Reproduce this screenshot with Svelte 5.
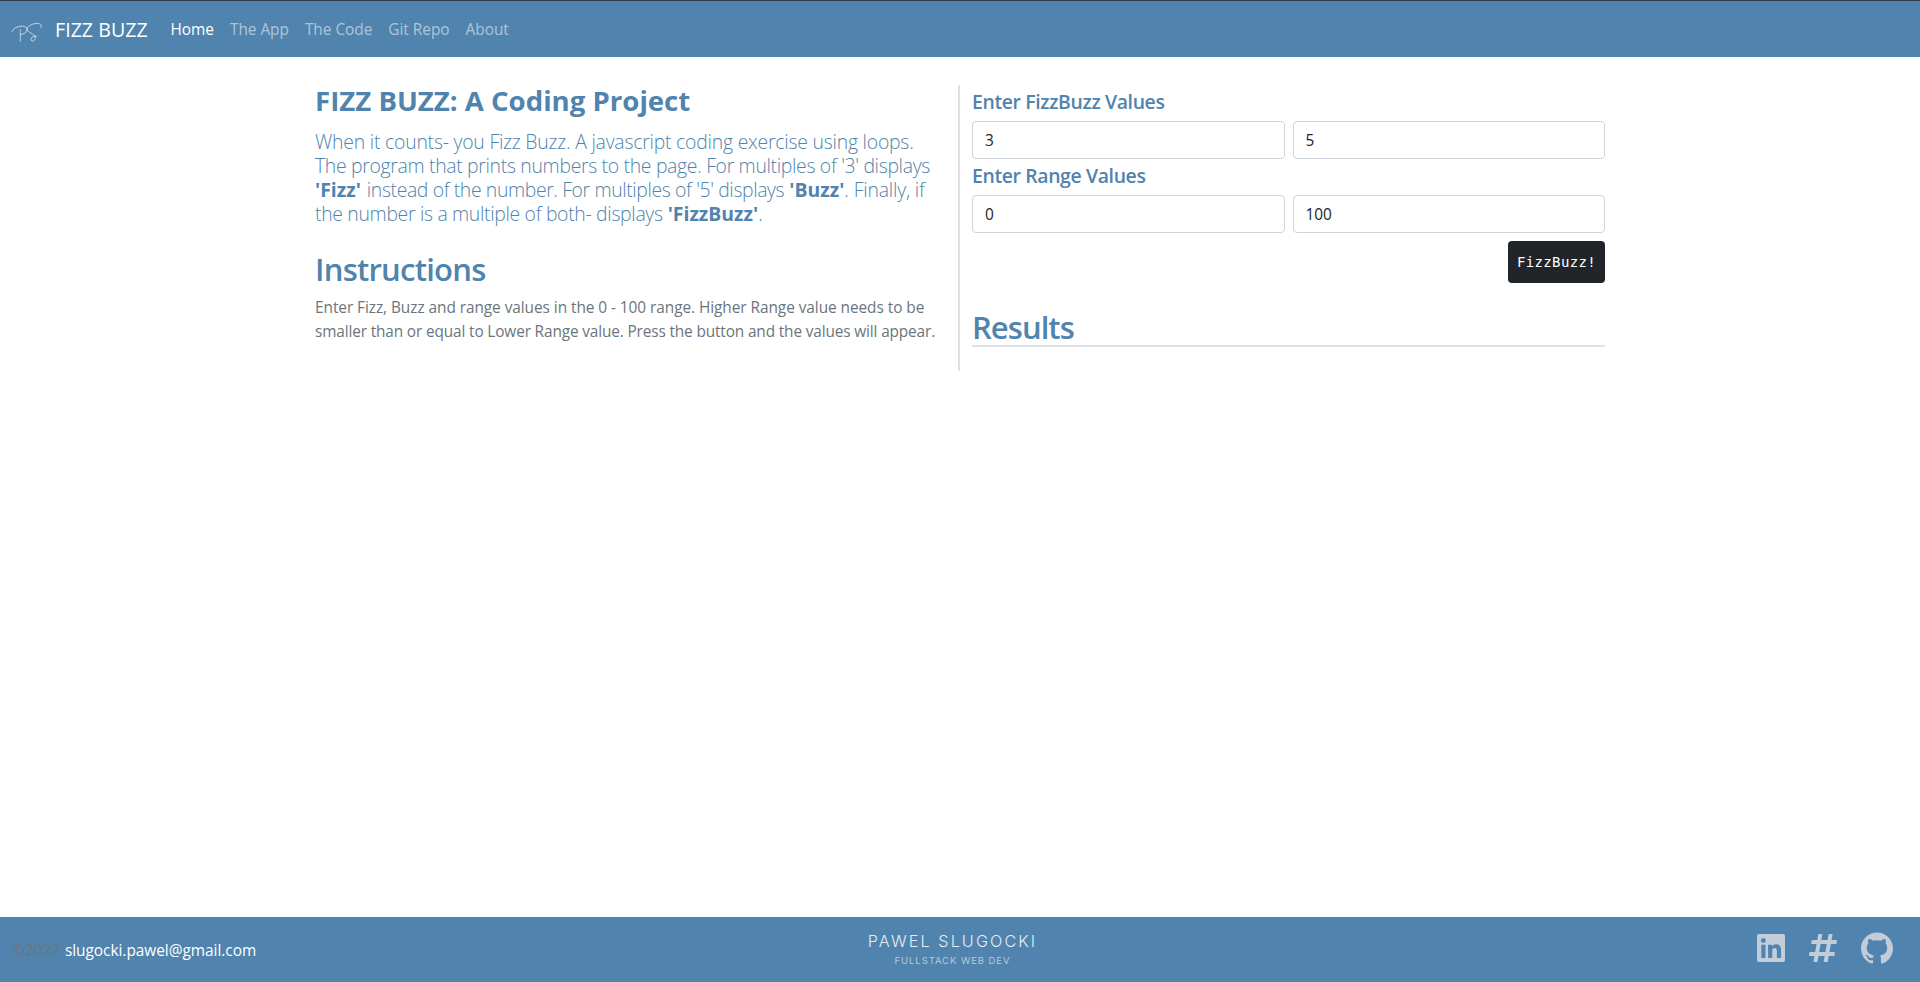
<script>
  let fizz = $state('3');
  let buzz = $state('5');
  let low = $state('0');
  let high = $state('100');
  const links = ['Home', 'The App', 'The Code', 'Git Repo', 'About'];
</script>

<div class="page">
  <nav>
    <a class="logo" href="#home" aria-label="Home">
      <svg viewBox="0 0 34 24" width="34" height="24" fill="none" stroke="#fff" stroke-width="0.9" stroke-linecap="round">
        <path d="M2 10.5C3 7.500 7 5.500 11 5.200C15 5 17.500 6.500 17 9C16.500 11.500 13.500 13.500 10.500 13.500" opacity=".75" />
        <path d="M10.300 8.500V20.500" opacity=".65" />
        <path d="M31 6.500C32.500 4 30 2 26 2.500C21 3 16.500 6 17 8.500C17.500 11 24 13 25 15.500C26 18 24.500 20 22.500 20C20.500 20 20.500 17.500 22 16.200C23.500 15.200 25 15 26.500 15.200" opacity=".7" />
      </svg>
    </a>
    <a class="brand" href="#home">FIZZ BUZZ</a>
    {#each links as link, i}
      <a class="link" class:active={i === 0} href="#top">{link}</a>
    {/each}
  </nav>

  <main>
    <section class="intro">
      <h1>FIZZ BUZZ: A Coding Project</h1>
      <p class="lead">
        <span class="l1">When it counts- you Fizz Buzz. A javascript coding exercise using loops.</span><br />
        <span class="l2">The program that prints numbers to the page. For multiples of '3' displays</span><br />
        <b class="fizz">'Fizz'</b> <span class="l3">instead of the number. For multiples of '5' displays</span> <b>'Buzz'</b><span class="l4">. Finally, if</span><br />
        <span class="l2">the number is a multiple of both- displays</span> <b>'FizzBuzz'</b>.
      </p>
      <h2>Instructions</h2>
      <p class="help">
        <span class="h1">Enter Fizz, Buzz and range values in the 0 - 100 range. Higher Range value needs to be</span><br />
        <span class="h2">smaller than or equal to Lower Range value. Press the button and the values will appear.</span>
      </p>
    </section>

    <section class="app">
      <h5>Enter FizzBuzz Values</h5>
      <div class="row">
        <input aria-label="Fizz" bind:value={fizz} />
        <input aria-label="Buzz" bind:value={buzz} />
      </div>
      <h5>Enter Range Values</h5>
      <div class="row">
        <input aria-label="From" bind:value={low} />
        <input aria-label="To" bind:value={high} />
      </div>
      <button>FizzBuzz!</button>
      <h2 class="results">Results</h2>
    </section>
  </main>

  <footer>
    <div class="contact"><span>©2022</span><a href="#mail">slugocki.pawel@gmail.com</a></div>
    <div class="sign">
      <div class="name">PAWEL SLUGOCKI</div>
      <div class="role">FULLSTACK WEB DEV</div>
    </div>
    <div class="social">
      <svg width="28" height="32" viewBox="0 0 448 512"><path d="M416 32H31.900C14.300 32 0 46.500 0 64.300v383.400C0 465.500 14.300 480 31.900 480H416c17.600 0 32-14.500 32-32.300V64.300c0-17.800-14.400-32.300-32-32.300zM135.400 416H69V202.200h66.500V416zm-33.200-243c-21.300 0-38.500-17.300-38.500-38.500S80.900 96 102.200 96c21.200 0 38.500 17.300 38.500 38.500 0 21.300-17.200 38.500-38.500 38.500zm282.100 243h-66.400V312c0-24.800-.5-56.700-34.500-56.700-34.600 0-39.900 27-39.900 54.900V416h-66.400V202.200h63.700v29.200h.9c8.900-16.800 30.600-34.500 62.900-34.500 67.200 0 79.700 44.300 79.700 101.900V416z" /></svg>
      <svg width="28" height="32" viewBox="0 0 448 512"><path d="M440.667 182.109l7.143-40c1.313-7.355-4.342-14.109-11.813-14.109h-74.810l14.623-81.891C377.123 38.754 371.468 32 363.997 32h-40.632a12 12 0 0 0-11.813 9.891L296.175 128H197.540l14.623-81.891C213.477 38.754 207.822 32 200.350 32h-40.632a12 12 0 0 0-11.813 9.891L132.528 128H53.432a12 12 0 0 0-11.813 9.891l-7.143 40C33.163 185.246 38.818 192 46.289 192h74.810L98.242 320H19.146a12 12 0 0 0-11.813 9.891l-7.143 40C-1.123 377.246 4.532 384 12.003 384h74.810L72.190 465.891C70.877 473.246 76.532 480 84.003 480h40.632a12 12 0 0 0 11.813-9.891L151.826 384h98.634l-14.623 81.891C234.523 473.246 240.178 480 247.650 480h40.632a12 12 0 0 0 11.813-9.891L315.472 384h79.096a12 12 0 0 0 11.813-9.891l7.143-40c1.313-7.355-4.342-14.109-11.813-14.109h-74.810l22.857-128h79.096a12 12 0 0 0 11.813-9.891zM261.889 320h-98.634l22.857-128h98.634l-22.857 128z" /></svg>
      <svg width="32" height="32" viewBox="0 0 24 24"><path d="M12 .297c-6.630 0-12 5.373-12 12 0 5.303 3.438 9.800 8.205 11.385.6.113.82-.258.82-.577 0-.285-.01-1.040-.015-2.040-3.338.724-4.042-1.610-4.042-1.610C4.422 18.070 3.633 17.700 3.633 17.700c-1.087-.744.084-.729.084-.729 1.205.084 1.838 1.236 1.838 1.236 1.070 1.835 2.809 1.305 3.495.998.108-.776.417-1.305.76-1.605-2.665-.3-5.466-1.332-5.466-5.930 0-1.310.465-2.380 1.235-3.220-.135-.303-.54-1.523.105-3.176 0 0 1.005-.322 3.300 1.230.96-.267 1.980-.399 3-.405 1.020.006 2.040.138 3 .405 2.280-1.552 3.285-1.230 3.285-1.230.645 1.653.24 2.873.12 3.176.765.84 1.230 1.910 1.230 3.220 0 4.610-2.805 5.625-5.475 5.920.42.36.81 1.096.81 2.220 0 1.606-.015 2.896-.015 3.286 0 .315.21.69.825.57C20.565 22.092 24 17.592 24 12.297c0-6.627-5.373-12-12-12" /></svg>
    </div>
  </footer>
</div>

<style>
  :global(body) { margin: 0; background: #fff; }
  .page {
    box-sizing: border-box;
    height: 982px;
    display: flex;
    flex-direction: column;
    font: 400 15.4px/24px "Open Sans", "Noto Sans", sans-serif;
    color: #212529;
    white-space: nowrap;
  }
  a { text-decoration: none; color: #fff; }
  nav {
    box-sizing: border-box;
    height: 57px;
    border-top: 1px solid #303a4a;
    background: #5083ad;
    display: flex;
    align-items: center;
    padding: 2px 0 0 10px;
  }
  .logo { display: flex; width: 45px; padding-top: 6px; }
  .brand { font-size: 19.6px; width: 115.500px; letter-spacing: 0.02px; }
  .link { color: rgba(255, 255, 255, .55); margin-right: 16px; letter-spacing: -0.02px; }
  .link.active { color: #fff; }
  main {
    box-sizing: border-box;
    width: 1320px;
    margin: 28px auto 0;
    padding: 0 15px;
    display: grid;
    grid-template-columns: 645px 645px;
    height: 286px;
  }
  .intro { box-sizing: border-box; border-right: 2px solid #dee2e6; }
  h1, h2, h5, p { margin: 0; }
  h1, h2, h5 { color: #5083ad; }
  h1 { font-size: 27.6px; line-height: 31px; font-weight: 700; }
  .lead { margin-top: 14px; font-size: 19.4px; font-weight: 300; color: #5083ad; }
  b { font-weight: 700; }
  .fizz { margin-right: 1px; }
  .l1 { letter-spacing: -0.22px; }
  .l2 { letter-spacing: -0.32px; }
  .l3 { letter-spacing: -0.38px; }
  .l4 { letter-spacing: -0.18px; }
  h2 { font-size: 31px; line-height: 38px; font-weight: 600; letter-spacing: -0.76px; margin-top: 24px; }
  .help { margin-top: 8px; color: #6c757d; }
  .h1 { letter-spacing: -0.055px; }
  .h2 { letter-spacing: -0.145px; }
  .app { padding-left: 12px; display: flex; flex-direction: column; }
  h5 { font-size: 19.4px; line-height: 24px; font-weight: 600; letter-spacing: -0.36px; margin: 5px 0 7px; }
  .row { display: grid; grid-template-columns: 1fr 1fr; gap: 8px; }
  input {
    box-sizing: border-box;
    min-width: 0;
    height: 38px;
    border: 1px solid #ced4da;
    border-radius: 4px;
    padding: 0 12px;
    font: inherit;
    color: #212529;
    background: #fff;
  }
  button {
    align-self: flex-end;
    width: 97px;
    height: 42px;
    margin-top: 8px;
    padding: 0;
    border: 0;
    border-radius: 4px;
    background: #212529;
    color: #fff;
    font: 14px/42px "DejaVu Sans Mono", monospace;
    letter-spacing: .37px;
  }
  .results { margin-top: 26px; line-height: 36px; border-bottom: 2px solid #dee2e6; letter-spacing: -0.95px; }
  footer {
    box-sizing: border-box;
    height: 65px;
    margin-top: auto;
    background: #5083ad;
    display: grid;
    grid-template-columns: 1fr 200px 1fr;
    align-items: center;
    padding: 0 27px 0 12px;
  }
  .contact { padding-top: 2px; letter-spacing: -0.02px; }
  .contact span { color: #6c757d; margin-right: 5px; }
  .sign { text-align: center; color: #e4edf4; font-family: Inter, sans-serif; padding-top: 3px; }
  .name { font-size: 16.2px; line-height: 20px; letter-spacing: 2.1px; font-weight: 300; }
  .role { font-size: 9.5px; line-height: 20px; letter-spacing: .93px; color: #b5cbdd; }
  .social { display: flex; justify-content: flex-end; align-items: center; gap: 24px; padding-bottom: 4px; fill: #c1cdd8; }
</style>
